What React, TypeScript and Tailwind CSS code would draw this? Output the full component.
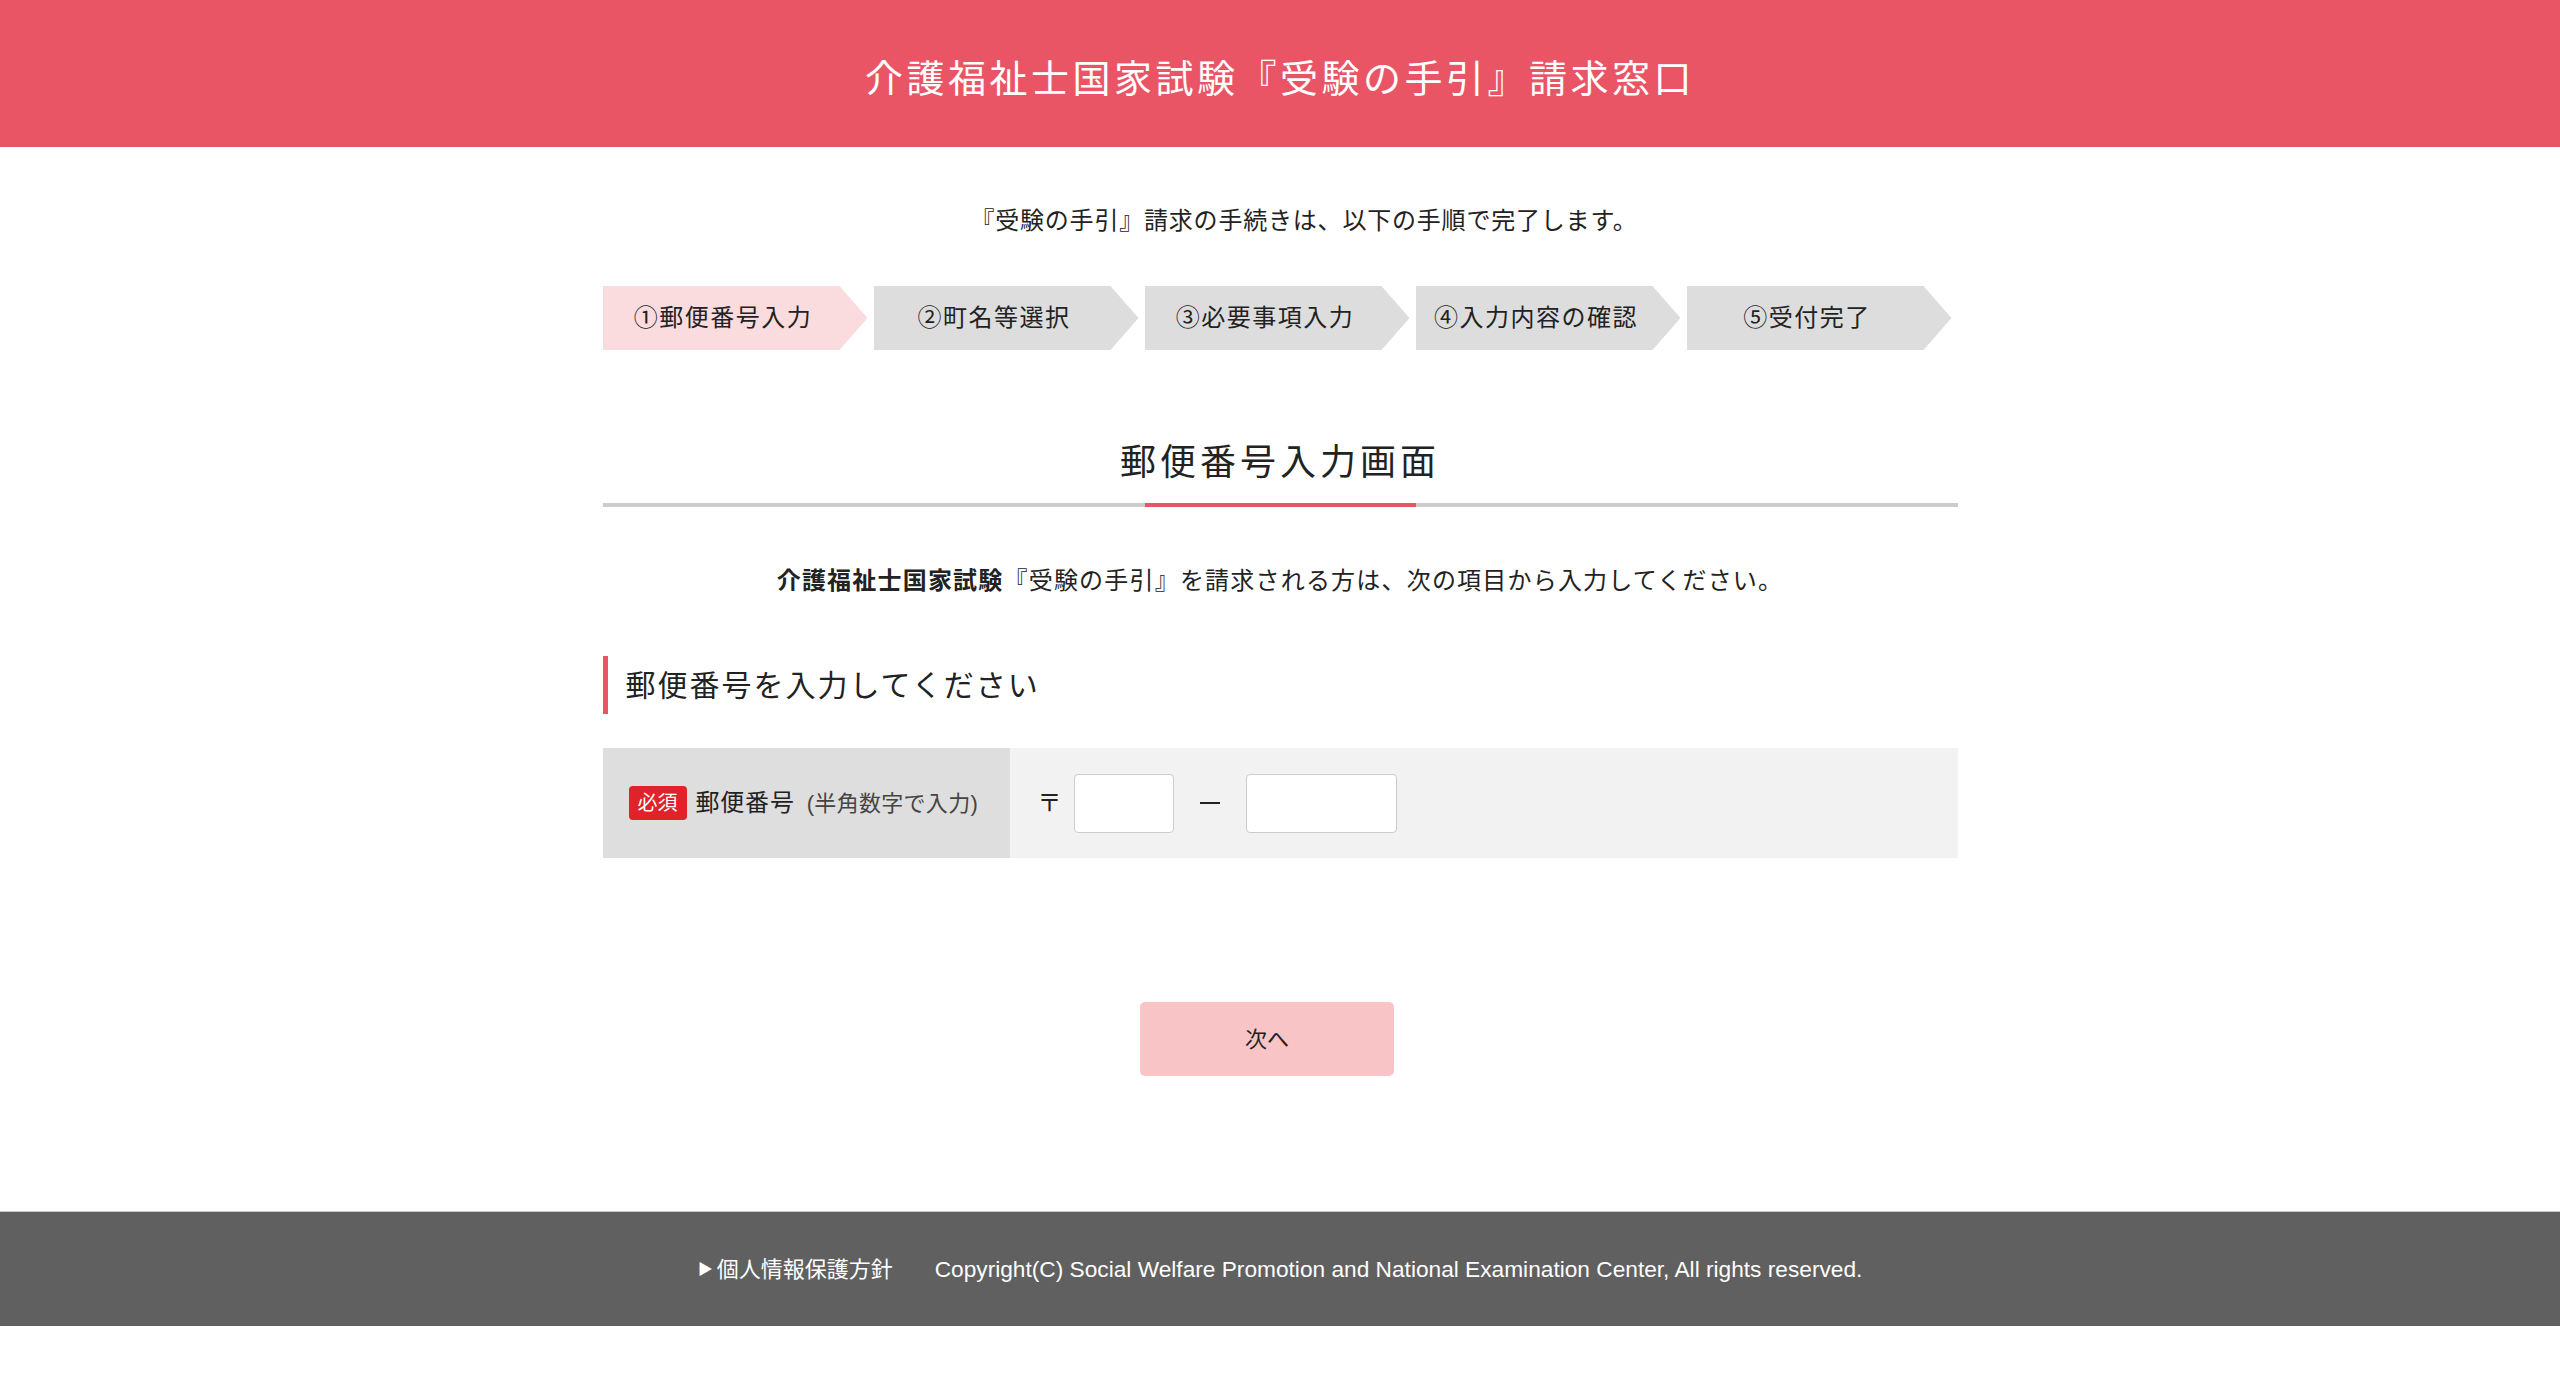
const steps = ["①郵便番号入力", "②町名等選択", "③必要事項入力", "④入力内容の確認", "⑤受付完了"];

export default function App() {
  return (
    <div className="min-h-[1393px] bg-white text-[#222] font-['Liberation_Sans','Noto_Sans_CJK_JP',sans-serif]">
      <header className="h-[147px] bg-[#ea5566] flex items-center justify-center pt-[11px]">
        <h1 className="text-[38px] tracking-[3.5px] text-white font-normal leading-none">
          介護福祉士国家試験『受験の手引』請求窓口
        </h1>
      </header>

      <main className="w-[1355px] mx-auto pt-[56px] pb-[135px]">
        <p className="text-center text-[24px] leading-[36px] tracking-[0.8px] pl-[48px]">
          『受験の手引』請求の手続きは、以下の手順で完了します。
        </p>

        <ol className="flex gap-[6px] mt-[47px]">
          {steps.map((s, i) => (
            <li
              key={s}
              className={
                (i === 0 ? "bg-[#fadcde] " : "bg-[#dddddd] ") +
                "w-[265px] h-[64px] pr-[24px] flex items-center justify-center text-[24px] tracking-[1.5px] text-[#222] [clip-path:polygon(0_0,237px_0,265px_50%,237px_100%,0_100%)]"
              }
            >
              {s}
            </li>
          ))}
        </ol>

        <h2 className="mt-[86px] text-center text-[36px] leading-[54px] tracking-[4px] font-normal">
          郵便番号入力画面
        </h2>
        <div className="mt-[13px] flex h-[4px]">
          <div className="flex-1 bg-[#cccccc]" />
          <div className="w-[271px] bg-[#ea5566]" />
          <div className="flex-1 bg-[#cccccc]" />
        </div>

        <p className="mt-[56px] text-center text-[24px] leading-[36px] tracking-[1.2px]">
          <span className="font-bold">介護福祉士国家試験</span>『受験の手引』を請求される方は、次の項目から入力してください。
        </p>

        <h3 className="mt-[57px] h-[58px] border-l-[5px] border-[#ea5566] pl-[18px] flex items-center text-[30px] tracking-[2px] font-normal">
          郵便番号を入力してください
        </h3>

        <div className="mt-[34px] flex h-[110px]">
          <div className="w-[407px] bg-[#dedede] flex items-center pl-[26px]">
            <span className="w-[58px] h-[34px] rounded-[4px] bg-[#e0222a] text-white text-[20px] flex items-center justify-center">
              必須
            </span>
            <span className="ml-[9px] text-[24px] tracking-[0.8px]">郵便番号</span>
            <span className="ml-[12px] text-[22px] tracking-[0.3px] text-[#444]">(半角数字で入力)</span>
          </div>
          <div className="flex-1 bg-[#f2f2f2] flex items-center pl-[28px]">
            <span className="text-[24px] w-[24px]">〒</span>
            <input
              type="text"
              className="ml-[12px] w-[100px] h-[59px] bg-white border border-[#cccccc] rounded-[4px]"
            />
            <span className="mx-[26px] w-[20px] h-[2px] bg-[#222]" />
            <input
              type="text"
              className="w-[151px] h-[59px] bg-white border border-[#cccccc] rounded-[4px]"
            />
          </div>
        </div>

        <div className="mt-[144px] flex justify-center pr-[26px]">
          <button className="w-[254px] h-[74px] rounded-[5px] bg-[#f8c4c6] text-[22px] text-[#222]">
            次へ
          </button>
        </div>
      </main>

      <footer className="h-[115px] bg-[#606060] border-t border-[#c8c8c8] flex items-center justify-center gap-[42px] text-white">
        <a className="flex items-center text-[22px]">
          <span className="text-[15px] mr-[4px]">▶</span>
          個人情報保護方針
        </a>
        <span className="text-[22.7px]">Copyright(C) Social Welfare Promotion and National Examination Center, All rights reserved.</span>
      </footer>
    </div>
  );
}
